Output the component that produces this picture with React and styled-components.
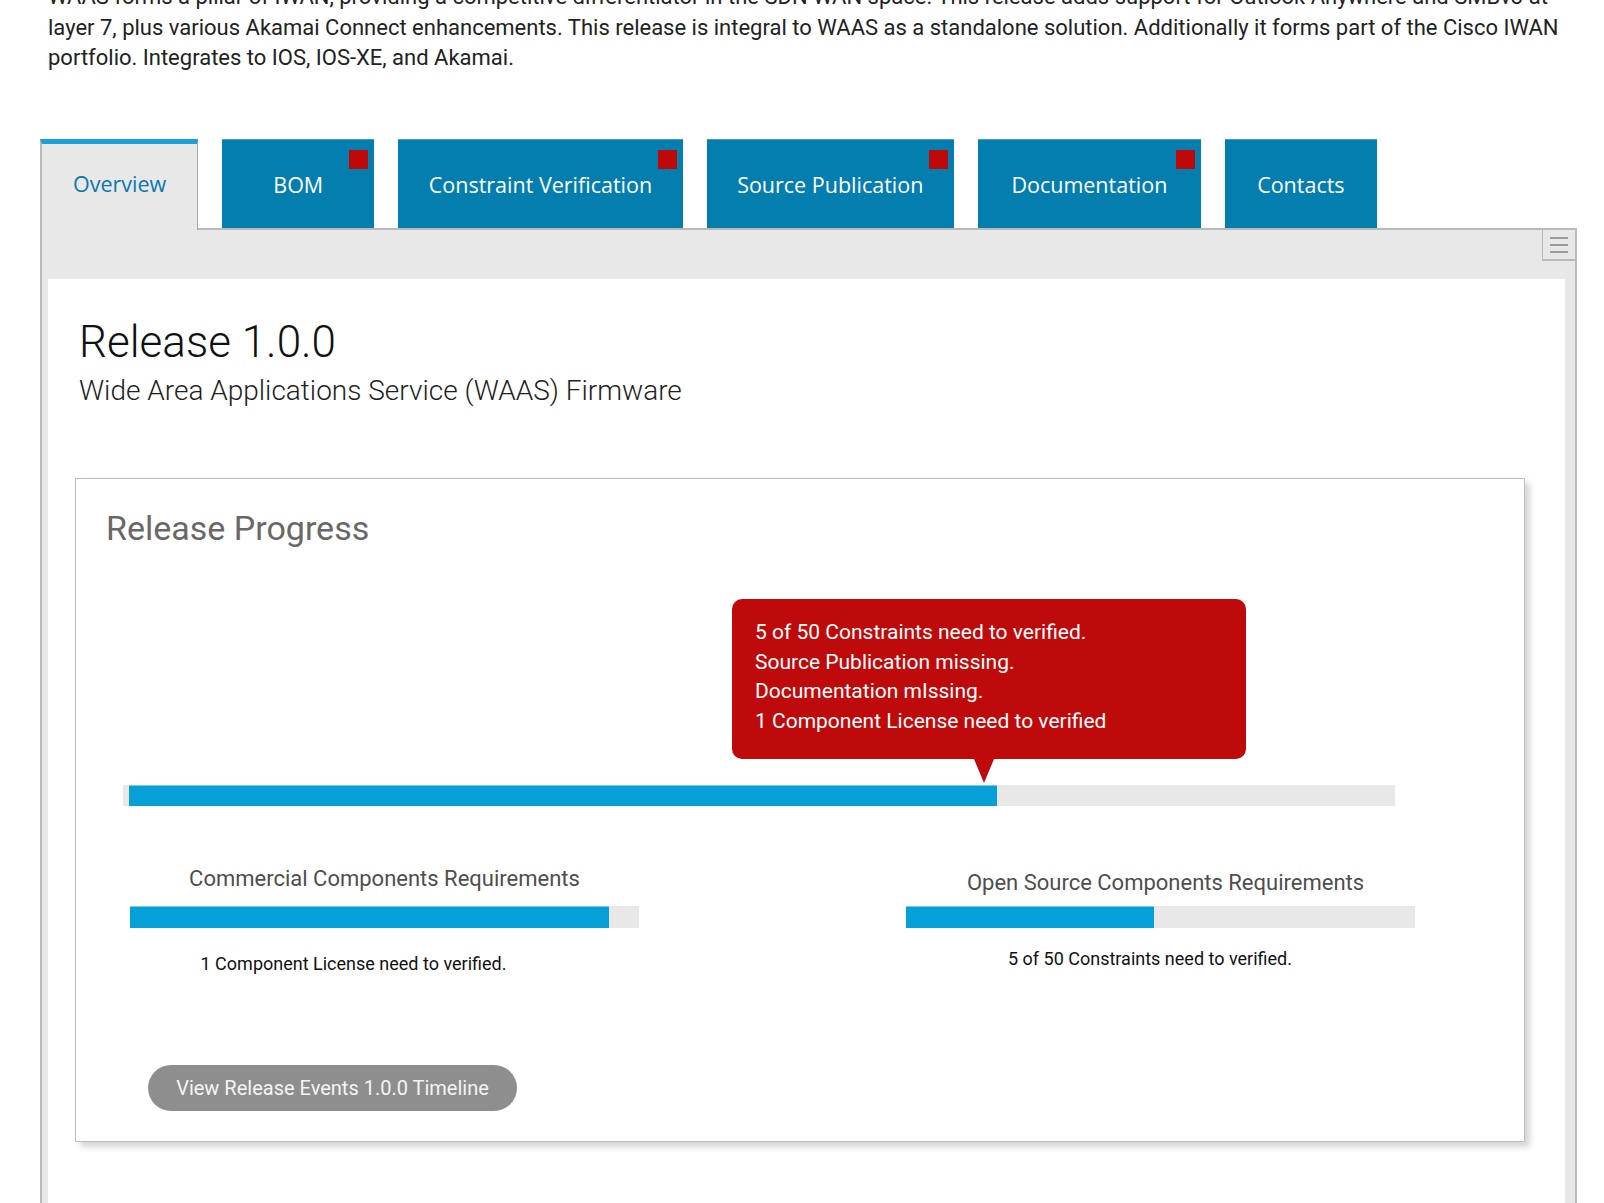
import styled, { createGlobalStyle } from "styled-components";

const GlobalStyle = createGlobalStyle`
  html, body {
    margin: 0;
    padding: 0;
    background: #ffffff;
    overflow: hidden;
  }
  body {
    font-family: Roboto, "Liberation Sans", Arial, sans-serif;
  }
`;

const tabs = [
  { label: "Overview", active: true, pad: 31 },
  { label: "BOM", flag: true, pad: 30.5 },
  { label: "Constraint Verification", flag: true, pad: 30.5 },
  { label: "Source Publication", flag: true, pad: 30.5 },
  { label: "Documentation", flag: true, pad: 33.5 },
  { label: "Contacts", pad: 30.5 },
];

function App() {
  return (
    <Page>
      <GlobalStyle />
      <Intro>
        WAAS forms a pillar of IWAN, providing a competitive differentiator in
        the SDN WAN space. This release adds support for Outlook Anywhere and
        SMBv3 at layer 7, plus various Akamai Connect enhancements. This release
        is integral to WAAS as a standalone solution. Additionally it forms part
        of the Cisco IWAN portfolio. Integrates to IOS, IOS-XE, and Akamai.
      </Intro>

      <TabBar>
        {tabs.map((tab) => (
          <Tab key={tab.label} $active={tab.active} $pad={tab.pad}>
            {tab.label}
            {tab.flag && <Flag />}
          </Tab>
        ))}
      </TabBar>

      <Panel>
        <MenuButton>
          <span />
          <span />
          <span />
        </MenuButton>
        <Content>
          <Header>
            <Title>Release 1.0.0</Title>
            <Subtitle>Wide Area Applications Service (WAAS) Firmware</Subtitle>
          </Header>

          <Card>
            <CardTitle>Release Progress</CardTitle>

            <MainTrack>
              <Tooltip>
                5 of 50 Constraints need to verified.
                <br />
                Source Publication missing.
                <br />
                Documentation mIssing.
                <br />1 Component License need to verified
              </Tooltip>
              <Fill style={{ width: "68.6%" }} />
            </MainTrack>

            <Requirements>
              <Requirement>
                <ReqLabel $drop={-2} $shift={0}>
                  Commercial Components Requirements
                </ReqLabel>
                <SmallTrack>
                  <Fill style={{ width: "94.1%" }} />
                </SmallTrack>
                <Caption $shift={62} $drop={3}>
                  1 Component License need to verified.
                </Caption>
              </Requirement>
              <Requirement>
                <ReqLabel $drop={2} $shift={-10}>
                  Open Source Components Requirements
                </ReqLabel>
                <SmallTrack>
                  <Fill style={{ width: "48.7%" }} />
                </SmallTrack>
                <Caption $shift={21} $drop={-2}>
                  5 of 50 Constraints need to verified.
                </Caption>
              </Requirement>
            </Requirements>

            <TimelineButton>View Release Events 1.0.0 Timeline</TimelineButton>
          </Card>
        </Content>
      </Panel>
    </Page>
  );
}

const Page = styled.div`
  width: 1604px;
`;

const Intro = styled.p`
  margin: -18px 0 0 48px;
  width: 1525px;
  font-size: 22px;
  line-height: 30.7px;
  color: #222222;
`;

const TabBar = styled.div`
  display: flex;
  align-items: flex-end;
  gap: 24px;
  margin: 65px 0 0 40px;
`;

const Tab = styled.div`
  position: relative;
  z-index: 1;
  box-sizing: border-box;
  height: ${(p) => (p.$active ? "91px" : "89px")};
  margin-bottom: ${(p) => (p.$active ? "-2px" : "0")};
  min-width: 152px;
  padding: 0 ${(p) => p.$pad}px ${(p) => (p.$active ? "7px" : "0")};
  display: flex;
  align-items: center;
  justify-content: center;
  font-family: "Open Sans", "Noto Sans", sans-serif;
  font-size: 21.5px;
  color: ${(p) => (p.$active ? "#0b78ad" : "#ffffff")};
  background: ${(p) => (p.$active ? "#e8e8e8" : "#047daf")};
  border-top: ${(p) => (p.$active ? "5px solid #1a9fd8" : "1px solid #3f9cc6")};
  border-left: ${(p) => (p.$active ? "2px solid #b9b9b9" : "none")};
  border-right: ${(p) => (p.$active ? "1px solid #a9a9a9" : "none")};
  white-space: nowrap;
  cursor: pointer;
`;

const Flag = styled.span`
  position: absolute;
  top: 10px;
  right: 6px;
  width: 19px;
  height: 19px;
  background: #bf0808;
`;

const Panel = styled.div`
  position: relative;
  box-sizing: border-box;
  width: 1537px;
  margin-left: 40px;
  padding: 49px 10px 0 6px;
  background: #e8e8e8;
  border: 2px solid #b9b9b9;
  border-bottom: none;
`;

const MenuButton = styled.div`
  position: absolute;
  top: 0;
  right: 0;
  box-sizing: border-box;
  width: 33px;
  height: 31px;
  display: flex;
  flex-direction: column;
  align-items: center;
  justify-content: center;
  gap: 5px;
  border-left: 1px solid #b9b9b9;
  border-bottom: 2px solid #b9b9b9;

  span {
    display: block;
    width: 18px;
    height: 2px;
    background: #9a9a9a;
  }
`;

const Content = styled.div`
  background: #ffffff;
  padding: 37px 40px 90px 27px;
`;

const Header = styled.div`
  padding-left: 4px;
`;

const Title = styled.h1`
  margin: 0;
  font-size: 44px;
  line-height: 52px;
  font-weight: 300;
  color: #111111;
`;

const Subtitle = styled.h2`
  margin: 6px 0 0;
  font-size: 28px;
  line-height: 34px;
  font-weight: 300;
  color: #1e1e1e;
`;

const Card = styled.div`
  margin-top: 70px;
  width: 1450px;
  box-sizing: border-box;
  padding: 29px 0 30px;
  border: 1px solid #bdbdbd;
  box-shadow: 5px 5px 6px rgba(0, 0, 0, 0.16);
  background: #ffffff;
`;

const CardTitle = styled.h3`
  margin: 0 0 0 30px;
  font-size: 34px;
  line-height: 40px;
  font-weight: 400;
  color: #6b6767;
`;

const MainTrack = styled.div`
  position: relative;
  margin: 237px 0 0 47px;
  width: 1272px;
  height: 21px;
  box-sizing: border-box;
  padding-left: 6px;
  background: #e8e8e8;
`;

const Fill = styled.div`
  height: 100%;
  box-sizing: border-box;
  background: #06a0d8;
  border-top: 1px solid #7ccbec;
`;

const Tooltip = styled.div`
  position: absolute;
  left: 609px;
  bottom: calc(100% + 26px);
  box-sizing: border-box;
  width: 514px;
  height: 160px;
  padding: 19px 23px;
  border-radius: 10px;
  background: #be0a0a;
  color: #ffffff;
  font-size: 21px;
  line-height: 29.6px;

  &::after {
    content: "";
    position: absolute;
    top: 100%;
    left: 242px;
    border-top: 24px solid #be0a0a;
    border-left: 10px solid transparent;
    border-right: 10px solid transparent;
  }
`;

const Requirements = styled.div`
  display: grid;
  grid-template-columns: 509px 509px;
  column-gap: 267px;
  margin: 62px 0 0 54px;
`;

const Requirement = styled.div`
  display: flex;
  flex-direction: column;
`;

const ReqLabel = styled.div`
  position: relative;
  top: ${(p) => p.$drop}px;
  padding-right: ${(p) => Math.max(p.$shift, 0)}px;
  padding-left: ${(p) => Math.max(-p.$shift, 0)}px;
  font-size: 22px;
  line-height: 26px;
  color: #4e4e4e;
  text-align: center;
  white-space: nowrap;
`;

const SmallTrack = styled.div`
  margin-top: 12px;
  height: 22px;
  background: #e8e8e8;
`;

const Caption = styled.div`
  position: relative;
  top: ${(p) => p.$drop}px;
  margin-top: 21px;
  padding-right: ${(p) => p.$shift}px;
  font-size: 18px;
  line-height: 23px;
  color: #111111;
  text-align: center;
  white-space: nowrap;
`;

const TimelineButton = styled.button`
  display: block;
  margin: 93px 0 0 72px;
  width: 369px;
  height: 46px;
  border: none;
  border-radius: 23px;
  background: #8e8e8e;
  color: #f4f4f4;
  font-family: Roboto, "Liberation Sans", Arial, sans-serif;
  font-size: 20px;
  padding-bottom: 2px;
  cursor: pointer;
`;

export default App;
